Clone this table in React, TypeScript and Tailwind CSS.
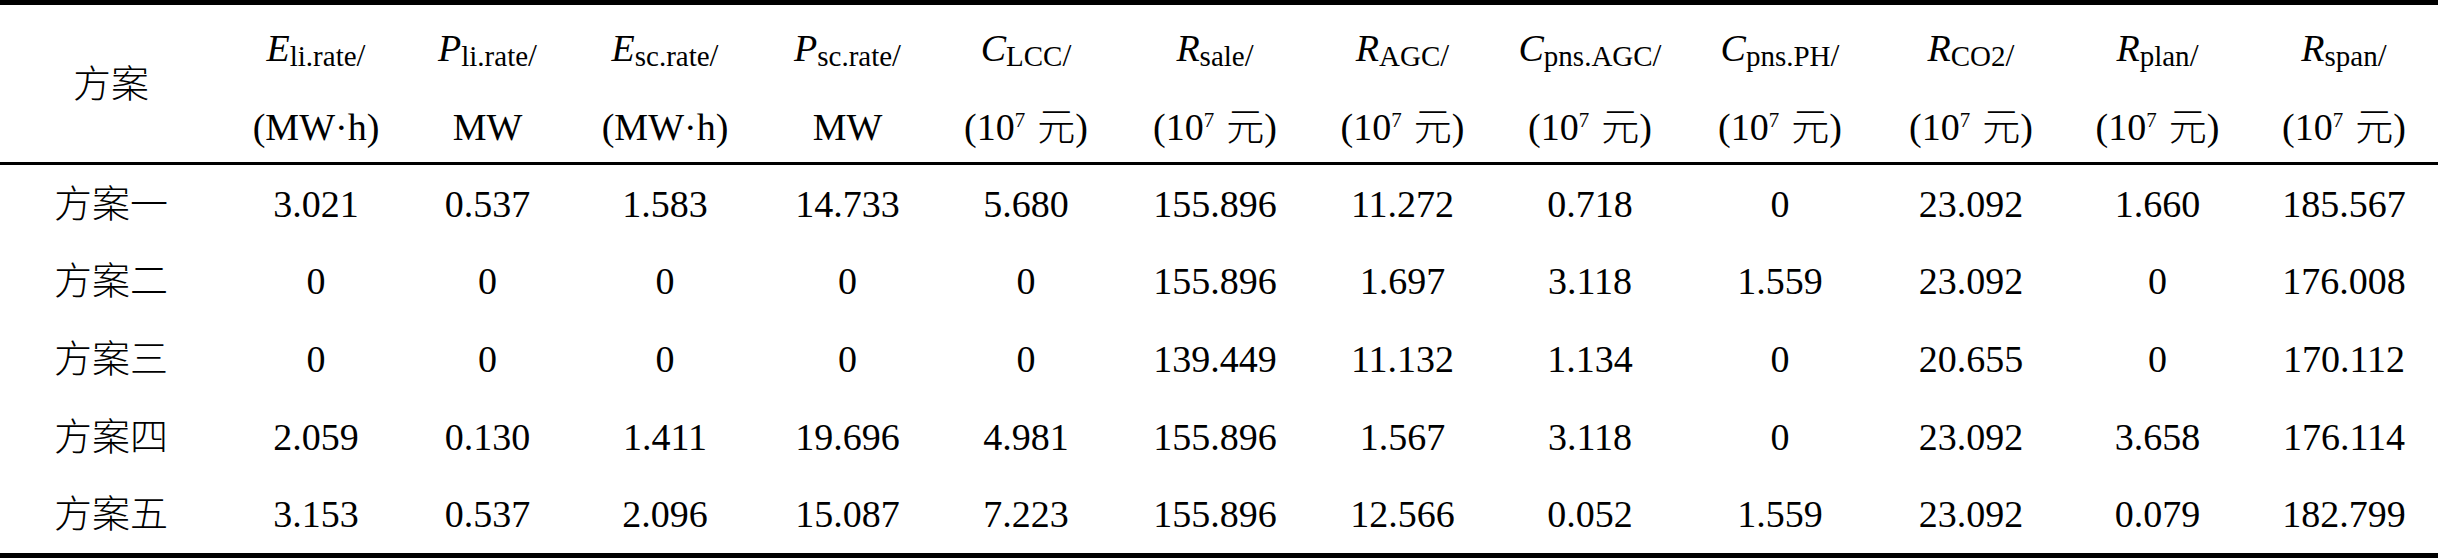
const cols =
  "grid grid-cols-[222px_188px_155px_200px_165px_192px_186px_189px_186px_194px_188px_185px_188px]";

type Head = { sym: string; sub: string; unit: "mwh" | "mw" | "yuan" };

const heads: Head[] = [
  { sym: "E", sub: "li.rate", unit: "mwh" },
  { sym: "P", sub: "li.rate", unit: "mw" },
  { sym: "E", sub: "sc.rate", unit: "mwh" },
  { sym: "P", sub: "sc.rate", unit: "mw" },
  { sym: "C", sub: "LCC", unit: "yuan" },
  { sym: "R", sub: "sale", unit: "yuan" },
  { sym: "R", sub: "AGC", unit: "yuan" },
  { sym: "C", sub: "pns.AGC", unit: "yuan" },
  { sym: "C", sub: "pns.PH", unit: "yuan" },
  { sym: "R", sub: "CO2", unit: "yuan" },
  { sym: "R", sub: "plan", unit: "yuan" },
  { sym: "R", sub: "span", unit: "yuan" },
];

const rows = [
  ["方案一", "3.021", "0.537", "1.583", "14.733", "5.680", "155.896", "11.272", "0.718", "0", "23.092", "1.660", "185.567"],
  ["方案二", "0", "0", "0", "0", "0", "155.896", "1.697", "3.118", "1.559", "23.092", "0", "176.008"],
  ["方案三", "0", "0", "0", "0", "0", "139.449", "11.132", "1.134", "0", "20.655", "0", "170.112"],
  ["方案四", "2.059", "0.130", "1.411", "19.696", "4.981", "155.896", "1.567", "3.118", "0", "23.092", "3.658", "176.114"],
  ["方案五", "3.153", "0.537", "2.096", "15.087", "7.223", "155.896", "12.566", "0.052", "1.559", "23.092", "0.079", "182.799"],
];

function Unit({ unit }: { unit: Head["unit"] }) {
  if (unit === "mw") return <span>MW</span>;
  if (unit === "mwh") return <span>(MW·h)</span>;
  return (
    <span>
      (10<span className="text-[21px] align-[13px]">7</span>
      <span className="ml-[12px] font-light">元</span>)
    </span>
  );
}

function HeadCell({ h }: { h: Head }) {
  return (
    <div className="flex flex-col items-center pt-[15px] gap-[17px]">
      <div className="h-[60px] flex items-center justify-center whitespace-nowrap leading-none">
        <span>
          <span className="italic">{h.sym}</span>
          <span className="text-[29px] align-[-5px]">
            {h.sub}
            <span className="text-[32px]">/</span>
          </span>
        </span>
      </div>
      <div className="h-[60px] flex items-center justify-center whitespace-nowrap leading-none">
        <Unit unit={h.unit} />
      </div>
    </div>
  );
}

export default function App() {
  return (
    <div className="w-[2438px] h-[560px] bg-white text-black text-[38px] font-['Liberation_Serif','Noto_Sans_CJK_SC',serif]">
      {/* header */}
      <div className={`${cols} border-t-[5px] border-b-[3px] border-black h-[165px]`}>
        <div className="flex items-center justify-center leading-none font-light">方案</div>
        {heads.map((h, i) => (
          <HeadCell key={i} h={h} />
        ))}
      </div>

      {/* body */}
      <div className="border-b-[5px] border-black">
        {rows.map((r, i) => (
          <div key={i} className={`${cols} h-[77.6px]`}>
            {r.map((v, j) => (
              <div
                key={j}
                className={`flex items-center justify-center leading-none whitespace-nowrap ${j === 0 ? "font-light" : ""}`}
              >
                {v}
              </div>
            ))}
          </div>
        ))}
      </div>
    </div>
  );
}
